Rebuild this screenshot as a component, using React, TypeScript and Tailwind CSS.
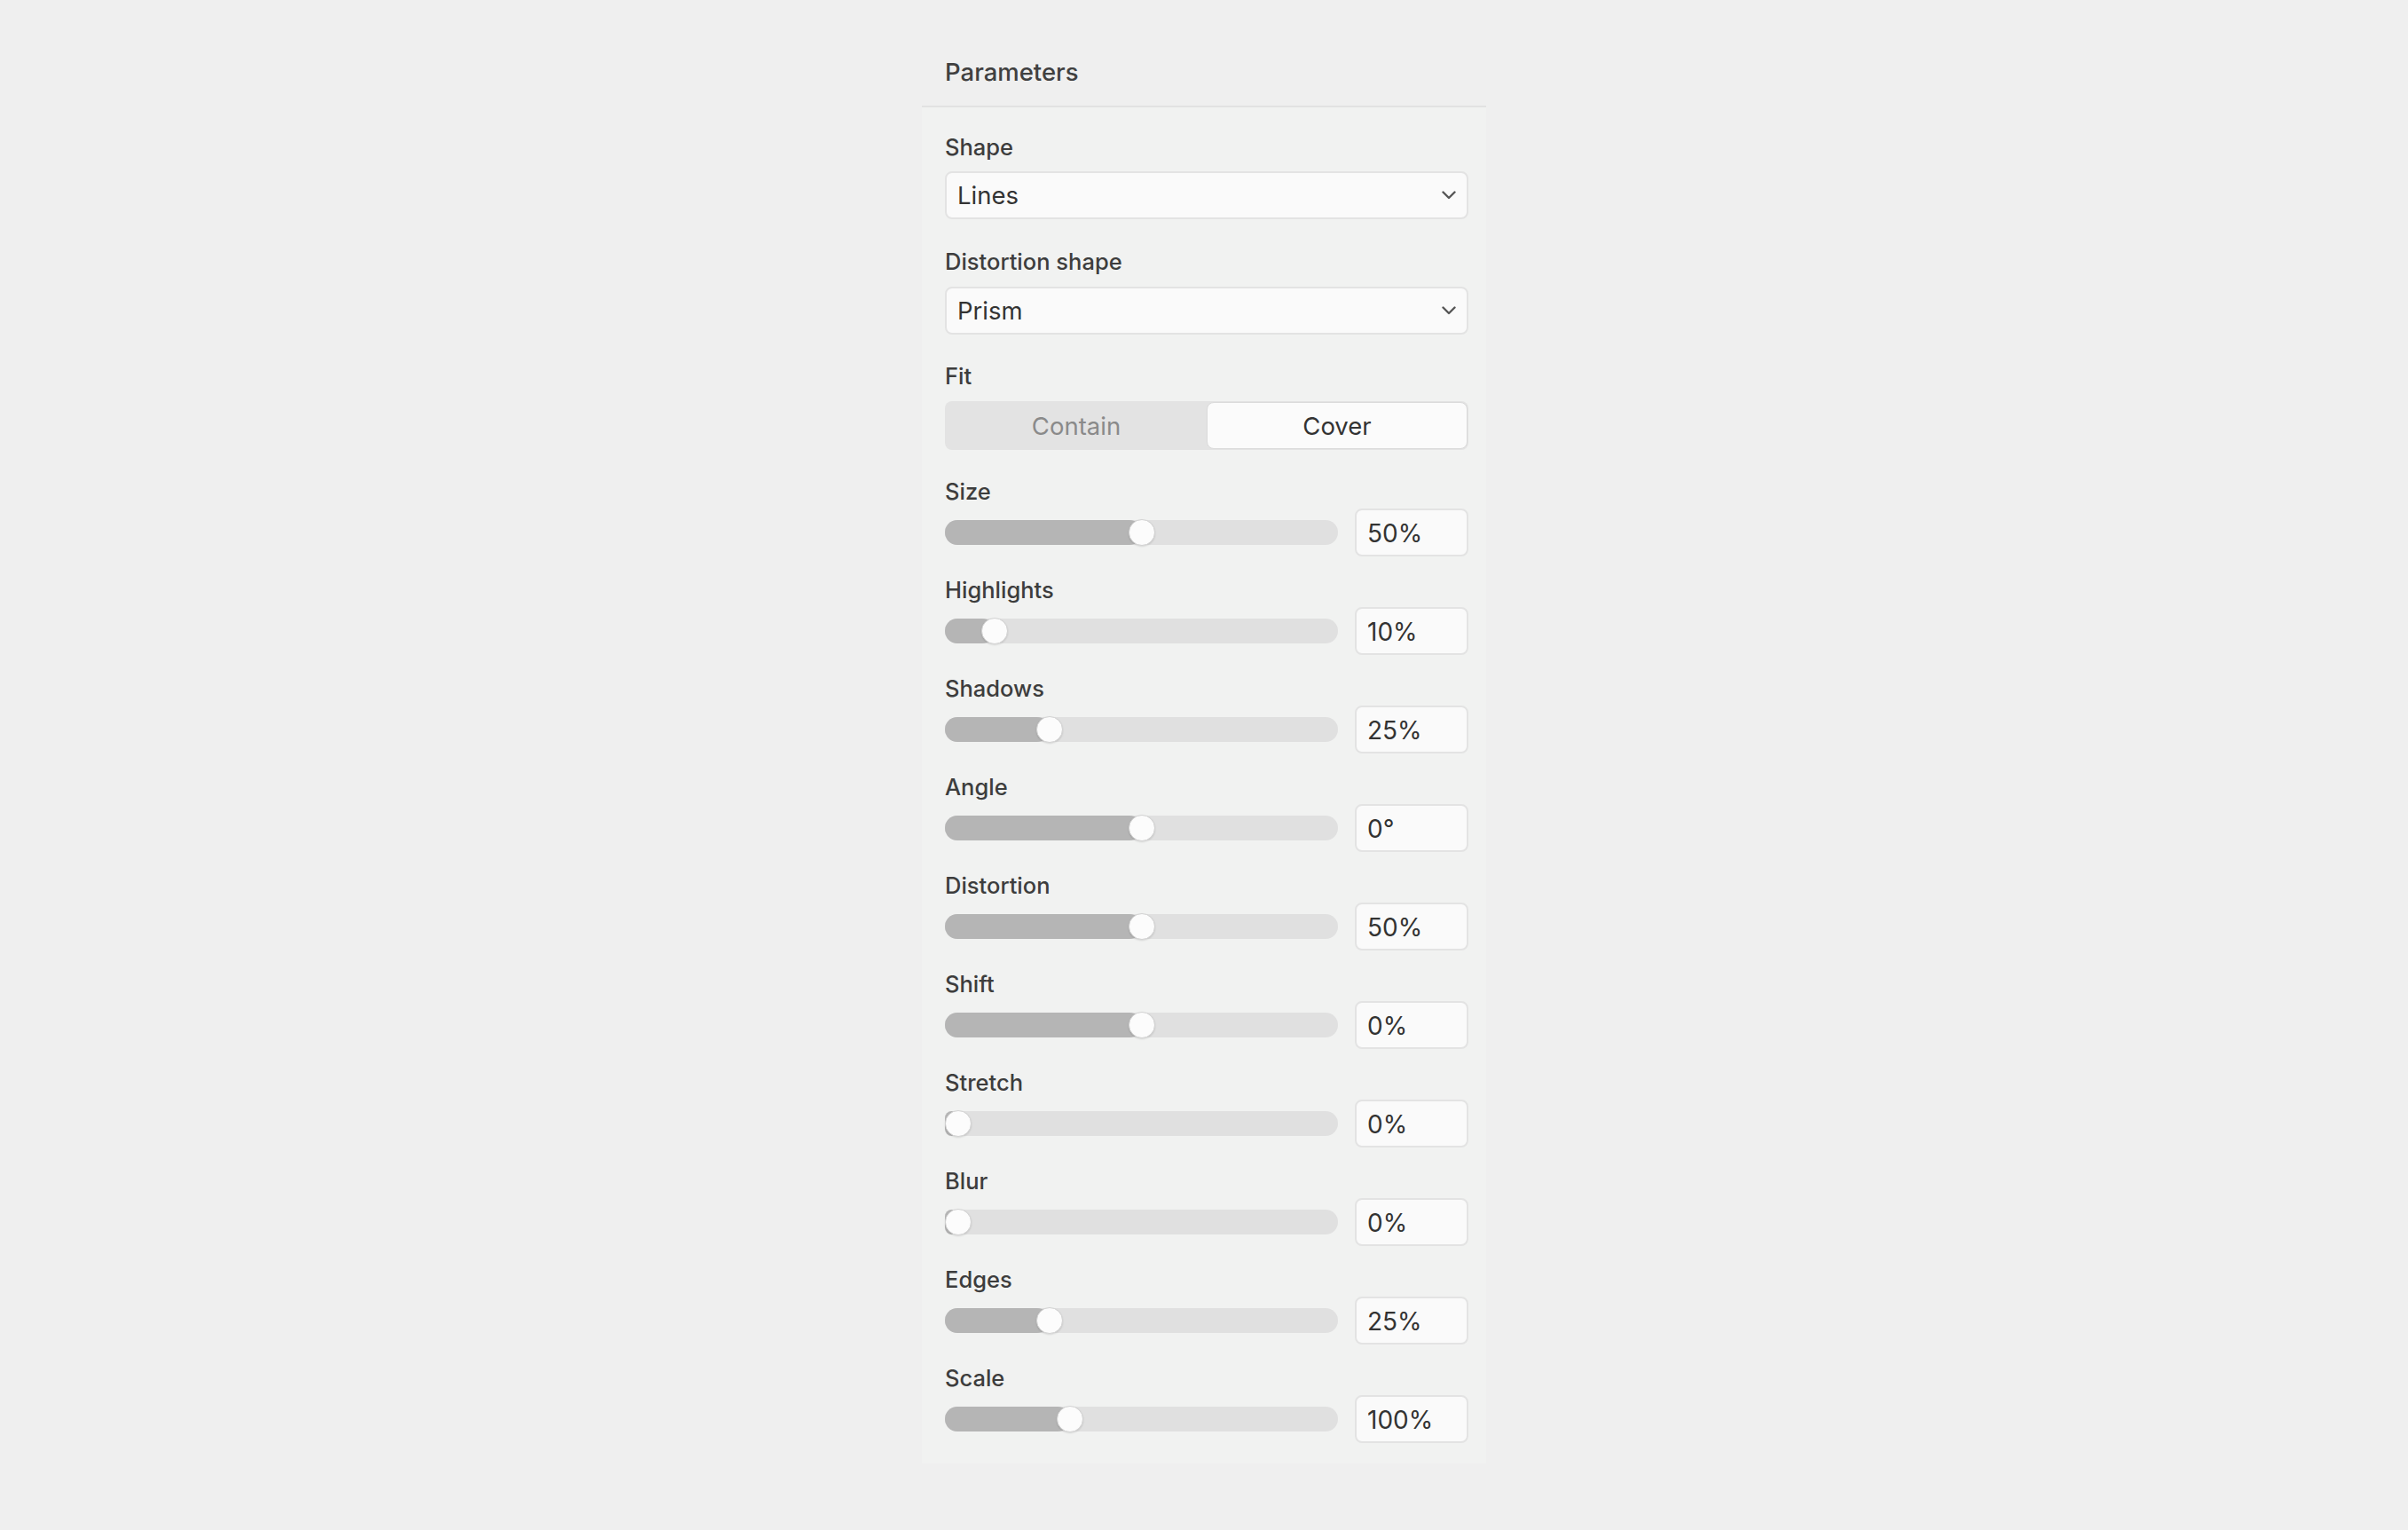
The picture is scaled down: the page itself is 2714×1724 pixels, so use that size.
import React from 'react';

type SliderParam = {
  label: string;
  value: string;
  position: number; // 0..1 along the track
};

const sliders: SliderParam[] = [
  { label: 'Size', value: '50%', position: 0.5 },
  { label: 'Highlights', value: '10%', position: 0.1 },
  { label: 'Shadows', value: '25%', position: 0.25 },
  { label: 'Angle', value: '0°', position: 0.5 },
  { label: 'Distortion', value: '50%', position: 0.5 },
  { label: 'Shift', value: '0%', position: 0.5 },
  { label: 'Stretch', value: '0%', position: 0 },
  { label: 'Blur', value: '0%', position: 0 },
  { label: 'Edges', value: '25%', position: 0.25 },
  { label: 'Scale', value: '100%', position: 0.305 },
];

const Label: React.FC<{ children: React.ReactNode; className?: string }> = ({ children, className = '' }) => (
  <div className={`h-[30px] leading-[28px] text-[25.5px] font-medium text-[#3d3d3d] ${className}`}>{children}</div>
);

const Select: React.FC<{ value: string }> = ({ value }) => (
  <div className="flex h-[54px] items-center rounded-[8px] border-2 border-[#e3e3e3] bg-[#fafafa] pl-[12px] pr-[12px]">
    <span className="pt-[2px] text-[27.5px] text-[#333333]">{value}</span>
    {/* chevron */}
    <svg className="ml-auto" width="16" height="10" viewBox="0 0 16 10" fill="none">
      <path d="M1.5 1.5 L8 8 L14.5 1.5" stroke="#555555" strokeWidth="2.4" strokeLinecap="round" strokeLinejoin="round" />
    </svg>
  </div>
);

const Slider: React.FC<SliderParam> = ({ label, value, position }) => (
  <div className="mb-[24px] last:mb-0">
    <Label className="mb-[3px]">{label}</Label>
    <div className="flex h-[54px] items-center gap-[19px]">
      <div className="relative h-[28px] flex-1 rounded-full bg-[#e0e0e0]">
        <div
          className="absolute left-0 top-0 h-full rounded-full bg-[#b5b5b5]"
          style={{ width: `calc(${position} * (100% - 30px) + 15px)` }}
        />
        <div
          className="absolute top-[-1px] h-[30px] w-[30px] rounded-full border border-[#d2d2d2] bg-[#fcfcfc] shadow-[0_1px_2px_rgba(0,0,0,0.12)]"
          style={{ left: `calc(${position} * (100% - 30px))` }}
        />
      </div>
      <div className="flex h-[54px] w-[128px] items-center rounded-[8px] border-2 border-[#e3e3e3] bg-[#fafafa] pl-[12px] pt-[2px] text-[28px] text-[#333333]">
        {value}
      </div>
    </div>
  </div>
);

export default function App() {
  return (
    <div
      className="flex min-h-screen justify-center bg-[#efefef]"
      style={{ fontFamily: 'Inter, "Noto Sans", "Liberation Sans", sans-serif' }}
    >
      <div className="flex w-[636px] flex-col self-start">
        <div className="h-[121px] border-b-2 border-[#e2e2e2] pl-[26px] pt-[66px]">
          <div className="h-[30px] leading-[30px] text-[27.5px] font-medium text-[#404040]">Parameters</div>
        </div>

        <div className="bg-[#f1f2f1] pb-[23px] pl-[26px] pr-[20px] pt-[31px]">
          <Label className="mb-[11px]">Shape</Label>
          <Select value="Lines" />

          <Label className="mb-[12px] mt-[34px]">Distortion shape</Label>
          <Select value="Prism" />

          <Label className="mb-[12px] mt-[33px]">Fit</Label>
          <div className="grid h-[55px] grid-cols-2 rounded-[8px] bg-[#e3e3e3] p-[1px]">
            <div className="flex items-center justify-center pt-[2px] text-[27.5px] text-[#8a8a8a]">Contain</div>
            <div className="flex items-center justify-center rounded-[8px] border border-[#dadada] bg-[#fbfbfb] pt-[2px] text-[27.5px] text-[#333333]">
              Cover
            </div>
          </div>

          <div className="mt-[33px]">
            {sliders.map((s) => (
              <Slider key={s.label} {...s} />
            ))}
          </div>
        </div>
      </div>
    </div>
  );
}
